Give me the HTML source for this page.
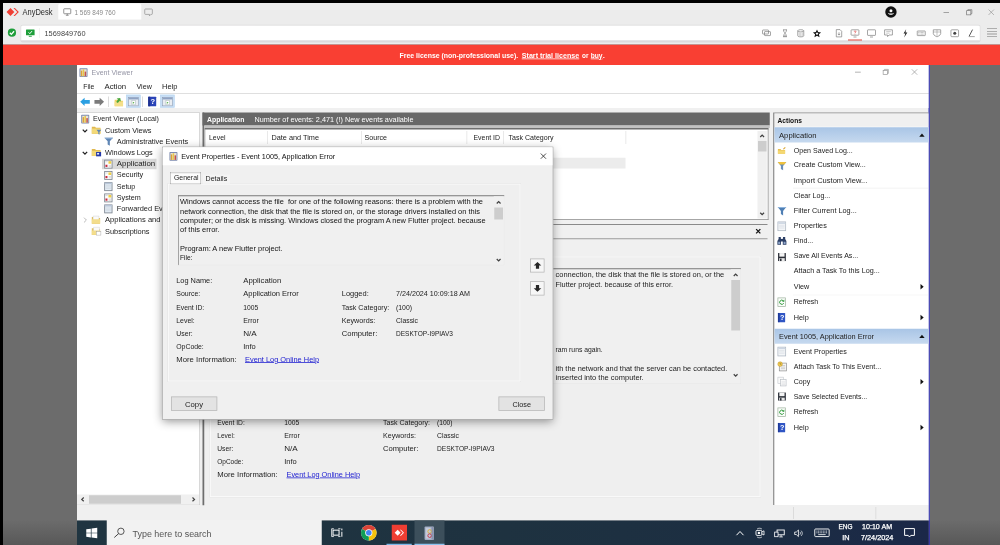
<!DOCTYPE html>
<html lang="en"><head><meta charset="utf-8"><title>AnyDesk - Event Viewer</title>
<style>
html,body{margin:0;padding:0;}
body{width:1000px;height:545px;overflow:hidden;background:#000;position:relative;font-family:"Liberation Sans",sans-serif;}
#clip{position:absolute;left:0;top:0;width:1000px;height:545px;overflow:hidden;background:#000;}
#root{position:absolute;left:0;top:0;width:4000px;height:2180px;transform:scale(0.25);transform-origin:0 0;filter:contrast(1);}
.a{position:absolute;box-sizing:border-box;}
.t{position:absolute;white-space:pre;line-height:1.2;transform-origin:0 50%;font-family:"Liberation Sans",sans-serif;}
svg{position:absolute;overflow:visible;}
</style></head>
<body>
<div id="clip">
<div id="root">
<div class="a" style="left:12px;top:260px;width:4028px;height:1960px;background:linear-gradient(to bottom,#6c6c6c 0,#6c6c6c 1820px,#585858 1920px,#585858 1960px);"></div>
<div class="a" style="left:12px;top:12px;width:4028px;height:167.2px;background:#ececec;"></div>
<div class="a" style="left:233.2px;top:13.6px;width:332px;height:64px;background:#fff;border-radius:8px 8px 0 0;"></div>
<div class="a" style="left:82px;top:99.2px;width:3840px;height:70.4px;background:#dcdadc;border-radius:8px;"></div>
<div class="a" style="left:82px;top:99.2px;width:3840px;height:62px;background:#fff;border:3.2px solid #dedede;border-bottom:none;border-radius:8px 8px 0 0;"></div>
<div class="a" style="left:12px;top:178.8px;width:4028px;height:81.2px;background:#f93f33;"></div>
<span class="t" style="left:90px;top:28.92px;font-size:34.4px;color:#2a2a2a;transform:scaleX(0.8719);">AnyDesk</span>
<span class="t" style="left:298px;top:34.28px;font-size:27.2px;color:#8a8a8a;transform:scaleX(0.9432);">1 569 849 760</span>
<span class="t" style="left:178px;top:113.84px;font-size:30.4px;color:#444;transform:scaleX(0.9702);">1569849760</span>
<span class="t" style="left:1598px;top:203.04px;font-size:30.4px;color:#fff;font-weight:bold;transform:scaleX(0.9128);">Free license (non-professional use).</span>
<span class="t" style="left:2086.8px;top:203.04px;font-size:30.4px;color:#fff;font-weight:bold;text-decoration:underline;transform:scaleX(0.9391);">Start trial license</span>
<span class="t" style="left:2328px;top:203.04px;font-size:30.4px;color:#fff;font-weight:bold;transform:scaleX(0.8419);">or</span>
<span class="t" style="left:2362.8px;top:203.04px;font-size:30.4px;color:#fff;font-weight:bold;text-decoration:underline;transform:scaleX(0.8736);">buy</span>
<span class="t" style="left:2410.8px;top:203.04px;font-size:30.4px;color:#fff;font-weight:bold;">.</span>
<svg style="left:24.8px;top:31.2px" width="52" height="33.6" viewBox="0 0 13 8.4"><path d="M0.3 4.2 L4.2 0.2 L8.1 4.2 L4.2 8.2 Z" fill="#ef3e33"/><path d="M7.2 0.2 L8.6 0.2 L12.6 4.2 L8.6 8.2 L7.2 8.2 L7.9 7.4 L11 4.2 L7.9 1 Z" fill="#ef3e33"/></svg>
<svg style="left:253.2px;top:33.2px" width="32" height="30" viewBox="0 0 8 7.5"><rect x="0.5" y="0.5" width="7" height="5" rx="0.6" fill="none" stroke="#7a7a7a" stroke-width="0.8"/><path d="M2.6 7 H5.4 M4 5.5 V7" stroke="#7a7a7a" stroke-width="0.8" fill="none"/></svg>
<svg style="left:576.8px;top:33.6px" width="34.4" height="32" viewBox="0 0 8.6 8"><path d="M1.2 0.5 H7.4 Q8.1 0.5 8.1 1.2 V5.2 Q8.1 5.9 7.4 5.9 H6.6 L5.2 7.4 V5.9 H1.2 Q0.5 5.9 0.5 5.2 V1.2 Q0.5 0.5 1.2 0.5Z" fill="none" stroke="#8e8e8e" stroke-width="0.7"/></svg>
<svg style="left:30.8px;top:114.4px" width="33.6" height="33.6" viewBox="0 0 8.4 8.4"><circle cx="4.2" cy="4.2" r="4.1" fill="#1e9e3a"/><path d="M2.1 4.3 L3.6 5.9 L6.3 2.8" stroke="#fff" stroke-width="1.3" fill="none"/></svg>
<svg style="left:104px;top:117.6px" width="34.4" height="28.8" viewBox="0 0 8.6 7.2"><rect x="0" y="0" width="8.6" height="5.8" rx="0.5" fill="#1e9e3a"/><path d="M2.8 6.8 H5.8" stroke="#1e9e3a" stroke-width="0.9"/><path d="M2.6 2.9 L3.8 4.2 L6 1.6" stroke="#fff" stroke-width="1" fill="none"/></svg>
<div class="a" style="left:158px;top:112px;width:2.4px;height:40px;background:#e6e6e6;"></div>
<svg style="left:3048px;top:115.8px" width="36" height="34" viewBox="0 0 9 8.5"><rect x="0.5" y="1" width="6" height="4" rx="0.5" stroke="#808080" stroke-width="0.7" fill="none"/><rect x="2.5" y="2.6" width="6" height="4" rx="0.5" stroke="#808080" stroke-width="0.7" fill="none"/></svg>
<svg style="left:3122px;top:115.8px" width="36" height="34" viewBox="0 0 9 8.5"><path d="M2.5 0.8 H6.5 M2.5 7.7 H6.5 M3 0.8 C3 3 4.2 3.6 4.5 4.2 C4.8 3.6 6 3 6 0.8 M3 7.7 C3 5.5 4.2 4.9 4.5 4.2 C4.8 4.9 6 5.5 6 7.7" stroke="#808080" stroke-width="0.7" fill="none"/><path d="M3.3 7.5 L4.5 6 L5.7 7.5Z" fill="#808080"/></svg>
<svg style="left:3185.2px;top:115.8px" width="36" height="34" viewBox="0 0 9 8.5"><ellipse cx="4.5" cy="1.8" rx="3" ry="1.1" stroke="#808080" stroke-width="0.7" fill="none"/><path d="M1.5 1.8 V6.8 C1.5 8.2 7.5 8.2 7.5 6.8 V1.8" stroke="#808080" stroke-width="0.7" fill="none"/><path d="M3 3.5 V7.3 M4.5 3.7 V7.6 M6 3.5 V7.3" stroke="#999" stroke-width="0.5"/></svg>
<svg style="left:3250px;top:115.8px" width="36" height="34" viewBox="0 0 9 8.5"><path d="M4.5 0.4 L5.7 3.1 L8.6 3.4 L6.4 5.3 L7.1 8.2 L4.5 6.7 L1.9 8.2 L2.6 5.3 L0.4 3.4 L3.3 3.1 Z" fill="#111"/><path d="M4.5 2.9 L5 4 L6.1 4.1 L5.3 4.8 L5.5 5.9 L4.5 5.3 L3.5 5.9 L3.7 4.8 L2.9 4.1 L4 4 Z" fill="#fff"/></svg>
<svg style="left:3338px;top:115.8px" width="36" height="34" viewBox="0 0 9 8.5"><path d="M1.8 0.6 H5.5 L7.2 2.3 V7.9 H1.8 Z" stroke="#808080" stroke-width="0.7" fill="none"/><path d="M4.5 3.3 V6 M3.3 4.9 L4.5 6.1 L5.7 4.9" stroke="#808080" stroke-width="0.7" fill="none"/></svg>
<svg style="left:3402px;top:115.8px" width="36" height="34" viewBox="0 0 9 8.5"><rect x="0.6" y="0.8" width="7.8" height="5.4" rx="0.5" stroke="#808080" stroke-width="0.7" fill="none"/><path d="M3 8 H6" stroke="#808080" stroke-width="0.7" fill="none"/><path d="M3.7 2.6 C3.7 1.7 5.4 1.7 5.4 2.7 C5.4 3.4 4.5 3.4 4.5 4.2 M4.5 4.9 V5.4" stroke="#d33" stroke-width="0.7" fill="none"/></svg>
<div class="a" style="left:3392px;top:158.4px;width:56px;height:3.6px;background:#e0443a;"></div>
<svg style="left:3467.6px;top:115.8px" width="36" height="34" viewBox="0 0 9 8.5"><rect x="0.5" y="0.8" width="8" height="5.6" rx="0.5" stroke="#808080" stroke-width="0.7" fill="none"/><path d="M3 8 H6" stroke="#808080" stroke-width="0.7" fill="none"/></svg>
<svg style="left:3536.4px;top:115.8px" width="36" height="34" viewBox="0 0 9 8.5"><path d="M0.6 0.8 H8.4 V6 H5 L3.6 7.6 V6 H0.6 Z" stroke="#808080" stroke-width="0.7" fill="none"/><path d="M2.2 2.6 H6.8 M2.2 4.2 H5.5" stroke="#999" stroke-width="0.5"/></svg>
<svg style="left:3602.8px;top:115.8px" width="36" height="34" viewBox="0 0 9 8.5"><path d="M5.4 0.2 L2.8 4.6 H4.6 L3.4 8.4 L6.6 3.4 H4.7 Z" fill="#222"/></svg>
<svg style="left:3666.8px;top:115.8px" width="36" height="34" viewBox="0 0 9 8.5"><rect x="0.5" y="2" width="8" height="4.6" rx="0.4" stroke="#808080" stroke-width="0.7" fill="none"/><path d="M1.6 3.4 H7.4 M1.6 5.1 H7.4" stroke="#888" stroke-width="0.7" stroke-dasharray="0.8 0.5"/></svg>
<svg style="left:3730.4px;top:115.8px" width="36" height="34" viewBox="0 0 9 8.5"><path d="M0.8 0.8 H8.2 V4.6 C8.2 6.4 4.5 7.8 4.5 7.8 C4.5 7.8 0.8 6.4 0.8 4.6 Z" stroke="#808080" stroke-width="0.7" fill="none"/><path d="M0.8 3 H8.2 M4.5 0.8 V7.6" stroke="#888" stroke-width="0.5"/></svg>
<svg style="left:3801.2px;top:115.8px" width="36" height="34" viewBox="0 0 9 8.5"><rect x="0.7" y="0.8" width="7.6" height="6.9" rx="0.8" stroke="#808080" stroke-width="0.7" fill="none"/><circle cx="4.5" cy="4.2" r="1.5" fill="#444"/></svg>
<svg style="left:3866.8px;top:115.8px" width="36" height="34" viewBox="0 0 9 8.5"><path d="M5.8 0.6 L2.4 7.2" stroke="#444" stroke-width="0.9"/><path d="M2 7.6 H8" stroke="#808080" stroke-width="0.7" fill="none"/></svg>
<div class="a" style="left:3948px;top:112.8px;width:40px;height:3.2px;background:#9a9a9a;"></div>
<div class="a" style="left:3948px;top:123.6px;width:40px;height:3.2px;background:#9a9a9a;"></div>
<div class="a" style="left:3948px;top:134.4px;width:40px;height:3.2px;background:#9a9a9a;"></div>
<div class="a" style="left:3948px;top:145.2px;width:40px;height:3.2px;background:#9a9a9a;"></div>
<svg style="left:3541.2px;top:25.2px" width="45.6" height="45.6" viewBox="0 0 11.4 11.4"><circle cx="5.7" cy="5.7" r="5.7" fill="#111"/><circle cx="5.7" cy="4.6" r="1.5" fill="#fff"/><path d="M2.6 6.4 C3.2 9.2 8.2 9.2 8.8 6.4 C7.6 7.6 3.8 7.6 2.6 6.4Z" fill="#fff"/></svg>
<div class="a" style="left:3774px;top:49.2px;width:22px;height:2.8px;background:#8a8a8a;"></div>
<svg style="left:3865.2px;top:37.2px" width="24" height="24" viewBox="0 0 6 6"><rect x="0.4" y="1.4" width="4.2" height="4.2" fill="none" stroke="#777" stroke-width="0.7"/><path d="M1.6 1.4 V0.4 H5.6 V4.4 H4.6" fill="none" stroke="#777" stroke-width="0.7"/></svg>
<svg style="left:3952.8px;top:37.2px" width="24" height="24" viewBox="0 0 6 6"><path d="M0.3 0.3 L5.7 5.7 M5.7 0.3 L0.3 5.7" stroke="#999" stroke-width="0.7"/></svg>
<div class="a" style="left:308px;top:260px;width:3410px;height:1822px;background:#f0f0f0;"></div>
<div class="a" style="left:3714.4px;top:260px;width:4.8px;height:1960px;background:#2b2bb4;"></div>
<div class="a" style="left:308px;top:260px;width:3406.4px;height:113.2px;background:#fff;"></div>
<div class="a" style="left:308px;top:373.2px;width:3406.4px;height:2.8px;background:#d8d8d8;"></div>
<div class="a" style="left:308px;top:376px;width:3406.4px;height:56px;background:#fff;"></div>
<span class="t" style="left:366px;top:270.56px;font-size:31.2px;color:#9494a4;transform:scaleX(0.9018);">Event Viewer</span>
<span class="t" style="left:333.2px;top:324.56px;font-size:32.4px;color:#1a1a1a;transform:scaleX(0.8429);">File</span>
<span class="t" style="left:418px;top:324.56px;font-size:32.4px;color:#1a1a1a;transform:scaleX(0.9641);">Action</span>
<span class="t" style="left:545.6px;top:324.56px;font-size:32.4px;color:#1a1a1a;transform:scaleX(0.8790);">View</span>
<span class="t" style="left:647.6px;top:324.56px;font-size:32.4px;color:#1a1a1a;transform:scaleX(0.9246);">Help</span>
<div class="a" style="left:3420px;top:287.2px;width:23.2px;height:2.8px;background:#9a9a9a;"></div>
<svg style="left:3531.2px;top:276px" width="24" height="24" viewBox="0 0 6 6"><rect x="0.4" y="1.4" width="4.2" height="4.2" fill="none" stroke="#999" stroke-width="0.7"/><path d="M1.6 1.4 V0.4 H5.6 V4.4 H4.6" fill="none" stroke="#999" stroke-width="0.7"/></svg>
<svg style="left:3646.4px;top:276px" width="24" height="24" viewBox="0 0 6 6"><path d="M0.3 0.3 L5.7 5.7 M5.7 0.3 L0.3 5.7" stroke="#999" stroke-width="0.7"/></svg>
<div class="a" style="left:308px;top:2020px;width:3406.4px;height:62px;background:#f0f0f0;"></div>
<div class="a" style="left:3172px;top:2028px;width:2.8px;height:48px;background:#d5d5d5;"></div>
<div class="a" style="left:3502px;top:2028px;width:2.8px;height:48px;background:#d5d5d5;"></div>
<svg style="left:316.8px;top:271.6px" width="34" height="36.8" viewBox="0 0 8.5 9.2"><rect x="0.2" y="0.3" width="8.1" height="8.7" rx="0.7" fill="#7d8bb0"/><rect x="1.2" y="1.2" width="6.2" height="7" fill="#e8e4d8"/><rect x="1.6" y="2.6" width="1.5" height="5.6" fill="#d9a23a"/><rect x="3.5" y="1.4" width="1.5" height="6.8" fill="#e8c84a"/><rect x="5.4" y="3.6" width="1.5" height="4.6" fill="#c0504d"/></svg>
<svg style="left:320px;top:389.6px" width="40" height="34.4" viewBox="0 0 10 8.6"><path d="M0.2 4.3 L4.6 0.2 V2.4 H9.8 V6.2 H4.6 V8.4 Z" fill="#2a9fe2"/></svg>
<svg style="left:377.2px;top:389.6px" width="40" height="34.4" viewBox="0 0 10 8.6"><path d="M9.8 4.3 L5.4 0.2 V2.4 H0.2 V6.2 H5.4 V8.4 Z" fill="#7b7b7b"/></svg>
<div class="a" style="left:432px;top:386px;width:2.8px;height:42px;background:#cfcfcf;"></div>
<svg style="left:456.8px;top:389.2px" width="36.8" height="36.8" viewBox="0 0 9.2 9.2"><path d="M0.4 2.6 H3.4 L4.2 3.6 H8.8 V8.9 H0.4 Z" fill="#efd166"/><path d="M0.4 4.4 H8.8 V8.9 H0.4Z" fill="#f4df8a"/><path d="M4.4 0.2 L7 2.8 H5.4 V5.8 H3.4 V2.8 H1.8 Z" fill="#4aa83c" transform="rotate(35 4.4 3)"/></svg>
<div class="a" style="left:504.8px;top:379.2px;width:56.8px;height:51.2px;background:#c7def5;border:2.4px solid #b3d1ef;"></div>
<svg style="left:513.6px;top:388.8px" width="40" height="35.2" viewBox="0 0 10 8.8"><rect x="0.2" y="0.2" width="9.6" height="8.4" fill="#e9edf2" stroke="#8794a8" stroke-width="0.5"/><rect x="0.2" y="0.2" width="9.6" height="2" fill="#8fa3c4"/><rect x="3.4" y="3.4" width="3.4" height="4.2" fill="#fff" stroke="#9aa" stroke-width="0.4"/><path d="M4.3 4.4 L6 5.5 L4.3 6.6Z" fill="#4aa83c"/></svg>
<div class="a" style="left:640.8px;top:379.2px;width:56.8px;height:51.2px;background:#c7def5;border:2.4px solid #b3d1ef;"></div>
<svg style="left:649.6px;top:388.8px" width="40" height="35.2" viewBox="0 0 10 8.8"><rect x="0.2" y="0.2" width="9.6" height="8.4" fill="#e9edf2" stroke="#8794a8" stroke-width="0.5"/><rect x="0.2" y="0.2" width="9.6" height="2" fill="#8fa3c4"/><rect x="3.4" y="3.4" width="3.4" height="4.2" fill="#fff" stroke="#9aa" stroke-width="0.4"/><path d="M4.3 4.4 L6 5.5 L4.3 6.6Z" fill="#4aa83c"/></svg>
<div class="a" style="left:569.2px;top:386px;width:2.8px;height:42px;background:#cfcfcf;"></div>
<svg style="left:592px;top:385.6px" width="33.6" height="40" viewBox="0 0 8.4 10"><rect x="0.2" y="0.2" width="8" height="9.6" rx="0.6" fill="#2b44b8"/><rect x="0.2" y="0.2" width="2" height="9.6" fill="#1f3190"/><text x="4.9" y="7.6" font-family="Liberation Sans, sans-serif" font-size="7.5" font-weight="bold" fill="#fff" text-anchor="middle">?</text></svg>
<div class="a" style="left:308px;top:450px;width:490px;height:1570px;background:#fff;border:2.8px solid #b8b8b8;border-left:none;"></div>
<div class="a" style="left:408px;top:635.2px;width:218.4px;height:41.6px;background:#d9d9d9;"></div>
<span class="t" style="left:372px;top:456.16px;font-size:31.2px;color:#222;transform:scaleX(0.9193);">Event Viewer (Local)</span>
<span class="t" style="left:420px;top:500.96px;font-size:31.2px;color:#222;transform:scaleX(0.9358);">Custom Views</span>
<span class="t" style="left:466.8px;top:545.36px;font-size:31.2px;color:#222;transform:scaleX(0.9537);">Administrative Events</span>
<span class="t" style="left:420px;top:590.16px;font-size:31.2px;color:#222;transform:scaleX(0.9427);">Windows Logs</span>
<span class="t" style="left:466.8px;top:635.36px;font-size:31.2px;color:#222;transform:scaleX(1.0093);">Application</span>
<span class="t" style="left:466.8px;top:680.16px;font-size:31.2px;color:#222;transform:scaleX(0.9408);">Security</span>
<span class="t" style="left:466.8px;top:725.36px;font-size:31.2px;color:#222;transform:scaleX(0.9078);">Setup</span>
<span class="t" style="left:466.8px;top:770.16px;font-size:31.2px;color:#222;transform:scaleX(0.9232);">System</span>
<span class="t" style="left:466.8px;top:814.96px;font-size:31.2px;color:#222;transform:scaleX(0.9478);">Forwarded Ev</span>
<span class="t" style="left:420px;top:859.76px;font-size:31.2px;color:#222;transform:scaleX(0.9700);">Applications and</span>
<span class="t" style="left:420px;top:904.56px;font-size:31.2px;color:#222;transform:scaleX(0.9508);">Subscriptions</span>
<svg style="left:323.6px;top:458.4px" width="33.6" height="36.8" viewBox="0 0 8.5 9.2"><rect x="0.2" y="0.3" width="8.1" height="8.7" rx="0.7" fill="#7d8bb0"/><rect x="1.2" y="1.2" width="6.2" height="7" fill="#e8e4d8"/><rect x="1.6" y="2.6" width="1.5" height="5.6" fill="#d9a23a"/><rect x="3.5" y="1.4" width="1.5" height="6.8" fill="#e8c84a"/><rect x="5.4" y="3.6" width="1.5" height="4.6" fill="#c0504d"/></svg>
<svg style="left:328.8px;top:515.6px" width="21.6" height="14.4" viewBox="0 0 5.4 3.6"><path d="M0.5 0.6 L2.7 2.9 L4.9 0.6" fill="none" stroke="#222" stroke-width="1.3"/></svg>
<svg style="left:366.4px;top:501.6px" width="40" height="37.6" viewBox="0 0 10 9.4"><path d="M0.3 1.2 H3.6 L4.4 2.2 H9 V8.2 H0.3 Z" fill="#e0b84e"/><path d="M0.3 3 H9 V8.2 H0.3Z" fill="#f3d978"/><path d="M5 4.2 H9.8 L8 6.4 V9.2 L6.8 8.4 V6.4 Z" fill="#5f86b5"/></svg>
<svg style="left:416.8px;top:549.2px" width="36" height="34.4" viewBox="0 0 9 8.6"><path d="M0.2 0.4 H8.8 L5.6 4 V8.4 L3.4 7.2 V4 Z" fill="#5f86b5"/><path d="M0.2 0.4 H8.8 L8 1.4 H1Z" fill="#8fb0d6"/></svg>
<svg style="left:328.8px;top:604.8px" width="21.6" height="14.4" viewBox="0 0 5.4 3.6"><path d="M0.5 0.6 L2.7 2.9 L4.9 0.6" fill="none" stroke="#222" stroke-width="1.3"/></svg>
<svg style="left:366.4px;top:591.2px" width="40" height="37.6" viewBox="0 0 10 9.4"><path d="M0.3 1.2 H3.6 L4.4 2.2 H9 V8.2 H0.3 Z" fill="#e0b84e"/><path d="M0.3 3 H9 V8.2 H0.3Z" fill="#f3d978"/><rect x="4.6" y="4.2" width="5" height="4.4" fill="#2438a8"/><rect x="5.6" y="5.2" width="2" height="1.6" fill="#e8eefc"/></svg>
<svg style="left:417.2px;top:639.2px" width="32.8" height="35.2" viewBox="0 0 8.2 8.8"><rect x="0.4" y="0.4" width="7.4" height="8" fill="#fdfdfd" stroke="#7d8590" stroke-width="0.85"/><rect x="4.2" y="1.4" width="2.8" height="2.6" fill="#f0cf45"/><rect x="1.2" y="5" width="2" height="2.2" fill="#c8283c"/><path d="M1.2 2 H3.4 M4.4 5.6 H7 M4.4 6.8 H7" stroke="#bbb" stroke-width="0.5"/></svg>
<svg style="left:417.2px;top:684px" width="32.8" height="35.2" viewBox="0 0 8.2 8.8"><rect x="0.4" y="0.4" width="7.4" height="8" fill="#fdfdfd" stroke="#7d8590" stroke-width="0.85"/><rect x="4.2" y="1.4" width="2.8" height="2.6" fill="#f0cf45"/><rect x="1.2" y="5" width="2" height="2.2" fill="#c8283c"/><path d="M1.2 2 H3.4 M4.4 5.6 H7 M4.4 6.8 H7" stroke="#bbb" stroke-width="0.5"/></svg>
<svg style="left:417.2px;top:728.8px" width="32.8" height="35.2" viewBox="0 0 8.2 8.8"><rect x="0.4" y="0.4" width="7.4" height="8" fill="#e4edf5" stroke="#7d8590" stroke-width="0.85"/><rect x="0.4" y="0.4" width="7.4" height="1.6" fill="#b9c6d8"/><path d="M1.4 3.4 H6.8 M1.4 4.8 H6.8 M1.4 6.2 H6.8" stroke="#c4ccd6" stroke-width="0.5"/></svg>
<svg style="left:417.2px;top:773.6px" width="32.8" height="35.2" viewBox="0 0 8.2 8.8"><rect x="0.4" y="0.4" width="7.4" height="8" fill="#fdfdfd" stroke="#7d8590" stroke-width="0.85"/><rect x="4.2" y="1.4" width="2.8" height="2.6" fill="#f0cf45"/><rect x="1.2" y="5" width="2" height="2.2" fill="#c8283c"/><path d="M1.2 2 H3.4 M4.4 5.6 H7 M4.4 6.8 H7" stroke="#bbb" stroke-width="0.5"/></svg>
<svg style="left:417.2px;top:818.4px" width="32.8" height="35.2" viewBox="0 0 8.2 8.8"><rect x="0.4" y="0.4" width="7.4" height="8" fill="#e4edf5" stroke="#7d8590" stroke-width="0.85"/><rect x="0.4" y="0.4" width="7.4" height="1.6" fill="#b9c6d8"/><path d="M1.4 3.4 H6.8 M1.4 4.8 H6.8 M1.4 6.2 H6.8" stroke="#c4ccd6" stroke-width="0.5"/></svg>
<svg style="left:333.6px;top:868.8px" width="13.6" height="22.4" viewBox="0 0 3.4 5.6"><path d="M0.5 0.4 L2.9 2.8 L0.5 5.2" fill="none" stroke="#aaa" stroke-width="0.8"/></svg>
<svg style="left:366.4px;top:860.8px" width="40" height="37.6" viewBox="0 0 10 9.4"><path d="M0.3 1.8 H3.4 L4.2 2.8 H8.6 V8.4 H0.3 Z" fill="#e0c060"/><path d="M1.6 0.8 H7.4 V5 H1.6Z" fill="#fafafa" stroke="#bbb" stroke-width="0.3"/><path d="M0.3 4 H8.6 V8.4 H0.3Z" fill="#f3dd8c"/></svg>
<svg style="left:366.4px;top:905.6px" width="40" height="37.6" viewBox="0 0 10 9.4"><path d="M0.3 1.8 H3.4 L4.2 2.8 H8.6 V8.4 H0.3 Z" fill="#e0c060"/><path d="M2 0.8 H8 V5 H2Z" fill="#fafafa" stroke="#bbb" stroke-width="0.3"/><path d="M0.3 4 H8.6 V8.4 H0.3Z" fill="#f3dd8c"/><rect x="4.8" y="5" width="4.6" height="3.6" fill="#fff" stroke="#999" stroke-width="0.4"/></svg>
<div class="a" style="left:308px;top:1978.4px;width:488px;height:39.2px;background:#f0f0f0;"></div>
<div class="a" style="left:356px;top:1980.8px;width:368px;height:34.4px;background:#cdcdcd;"></div>
<svg style="left:323.2px;top:1988.4px" width="16" height="19.2" viewBox="0 0 4 4.8"><path d="M3 0.5 L1 2.4 L3 4.3" fill="none" stroke="#404040" stroke-width="1.2"/></svg>
<svg style="left:766.4px;top:1988.4px" width="16" height="19.2" viewBox="0 0 4 4.8"><path d="M1 0.5 L3 2.4 L1 4.3" fill="none" stroke="#404040" stroke-width="1.2"/></svg>
<div class="a" style="left:810.4px;top:450px;width:6.4px;height:1571.2px;background:#6e6e6e;"></div>
<div class="a" style="left:810.4px;top:449.6px;width:2268.8px;height:52.8px;background:#686868;"></div>
<div class="a" style="left:816.8px;top:502.4px;width:2262.4px;height:10px;background:#c2c2c2;"></div>
<span class="t" style="left:828px;top:458.56px;font-size:31.2px;color:#fff;font-weight:bold;transform:scaleX(0.8834);">Application</span>
<span class="t" style="left:1017.6px;top:458.56px;font-size:31.2px;color:#fff;transform:scaleX(0.9312);">Number of events: 2,471 (!) New events available</span>
<div class="a" style="left:818.4px;top:512.4px;width:2256px;height:366.4px;background:#fff;border:3.2px solid #8a8a8a;border-top:6.4px solid #707070;"></div>
<div class="a" style="left:824px;top:631.2px;width:1678.4px;height:42.4px;background:#ececec;"></div>
<div class="a" style="left:1068px;top:524px;width:2.8px;height:52px;background:#e2e2e2;"></div>
<div class="a" style="left:1444px;top:524px;width:2.8px;height:52px;background:#e2e2e2;"></div>
<div class="a" style="left:1866px;top:524px;width:2.8px;height:52px;background:#e2e2e2;"></div>
<div class="a" style="left:2012px;top:524px;width:2.8px;height:52px;background:#e2e2e2;"></div>
<div class="a" style="left:2502.4px;top:524px;width:2.8px;height:52px;background:#e2e2e2;"></div>
<span class="t" style="left:836px;top:529.76px;font-size:31.2px;color:#222;transform:scaleX(0.8852);">Level</span>
<span class="t" style="left:1086px;top:529.76px;font-size:31.2px;color:#222;transform:scaleX(0.9368);">Date and Time</span>
<span class="t" style="left:1458px;top:529.76px;font-size:31.2px;color:#222;transform:scaleX(0.9107);">Source</span>
<span class="t" style="left:1894.4px;top:529.76px;font-size:31.2px;color:#222;transform:scaleX(0.8862);">Event ID</span>
<span class="t" style="left:2033.6px;top:529.76px;font-size:31.2px;color:#222;transform:scaleX(0.9030);">Task Category</span>
<div class="a" style="left:3030px;top:524px;width:36.8px;height:350.4px;background:#f0f0f0;"></div>
<div class="a" style="left:3032px;top:564px;width:33.6px;height:41.6px;background:#cdcdcd;"></div>
<svg style="left:3039.2px;top:536px" width="19.2" height="16" viewBox="0 0 4.8 4"><path d="M0.5 3 L2.4 1 L4.3 3" fill="none" stroke="#404040" stroke-width="1.2"/></svg>
<svg style="left:3039.2px;top:847.2px" width="19.2" height="16" viewBox="0 0 4.8 4"><path d="M0.5 1 L2.4 3 L4.3 1" fill="none" stroke="#404040" stroke-width="1.2"/></svg>
<div class="a" style="left:820px;top:896px;width:2250px;height:3.6px;background:#8a8a8a;"></div>
<div class="a" style="left:820px;top:953.2px;width:2250px;height:3.6px;background:#9a9a9a;"></div>
<svg style="left:3023.2px;top:915.2px" width="20" height="20" viewBox="0 0 5 5"><path d="M0.4 0.4 L4.6 4.6 M4.6 0.4 L0.4 4.6" stroke="#111" stroke-width="1.3"/></svg>
<div class="a" style="left:840px;top:1025.6px;width:2201.6px;height:962.4px;background:#efefef;border:3.2px solid #fcfcfc;box-shadow:0 0 0 2px #e6e6e6;"></div>
<div class="a" style="left:876px;top:1072.8px;width:2088px;height:462px;background:#f0f0f0;border:2.8px solid #e6e6e6;border-top:4px solid #7a7a7a;border-left:3.2px solid #8a8a8a;"></div>
<span class="t" style="left:2222px;top:1080.16px;font-size:31.2px;color:#222;transform:scaleX(0.9587);">connection, the disk that the file is stored on, or the</span>
<span class="t" style="left:2222px;top:1118.96px;font-size:31.2px;color:#222;transform:scaleX(0.9414);">Flutter project. because of this error.</span>
<span class="t" style="left:2222px;top:1380.16px;font-size:31.2px;color:#222;transform:scaleX(0.8713);">ram runs again.</span>
<span class="t" style="left:2222px;top:1454.16px;font-size:31.2px;color:#222;transform:scaleX(0.9455);">ith the network and that the server can be contacted.</span>
<span class="t" style="left:2222px;top:1491.36px;font-size:31.2px;color:#222;transform:scaleX(0.9599);">inserted into the computer.</span>
<div class="a" style="left:2923.2px;top:1076.8px;width:37.6px;height:456px;background:#f0f0f0;"></div>
<div class="a" style="left:2925.2px;top:1120px;width:34.4px;height:202px;background:#cdcdcd;"></div>
<svg style="left:2932.8px;top:1092px" width="19.2" height="16" viewBox="0 0 4.8 4"><path d="M0.5 3 L2.4 1 L4.3 3" fill="none" stroke="#404040" stroke-width="1.2"/></svg>
<svg style="left:2932.8px;top:1492.8px" width="19.2" height="16" viewBox="0 0 4.8 4"><path d="M0.5 1 L2.4 3 L4.3 1" fill="none" stroke="#404040" stroke-width="1.2"/></svg>
<span class="t" style="left:869.2px;top:1668.96px;font-size:31.2px;color:#222;transform:scaleX(0.8575);">Event ID:</span>
<span class="t" style="left:1137.2px;top:1668.96px;font-size:31.2px;color:#222;transform:scaleX(0.8647);">1005</span>
<span class="t" style="left:869.2px;top:1720.96px;font-size:31.2px;color:#222;transform:scaleX(0.8410);">Level:</span>
<span class="t" style="left:1137.2px;top:1720.96px;font-size:31.2px;color:#222;transform:scaleX(0.8945);">Error</span>
<span class="t" style="left:869.2px;top:1773.36px;font-size:31.2px;color:#222;transform:scaleX(0.8589);">User:</span>
<span class="t" style="left:1137.2px;top:1773.36px;font-size:31.2px;color:#222;transform:scaleX(1.0385);">N/A</span>
<span class="t" style="left:869.2px;top:1825.76px;font-size:31.2px;color:#222;transform:scaleX(0.8331);">OpCode:</span>
<span class="t" style="left:1137.2px;top:1825.76px;font-size:31.2px;color:#222;transform:scaleX(0.9610);">Info</span>
<span class="t" style="left:869.2px;top:1878.56px;font-size:31.2px;color:#222;transform:scaleX(0.9902);">More Information:</span>
<span class="t" style="left:1145.6px;top:1878.56px;font-size:31.2px;color:#1a1ad0;text-decoration:underline;transform:scaleX(0.9421);">Event Log Online Help</span>
<span class="t" style="left:1532px;top:1668.96px;font-size:31.2px;color:#222;transform:scaleX(0.9038);">Task Category:</span>
<span class="t" style="left:1748px;top:1668.96px;font-size:31.2px;color:#222;transform:scaleX(0.8515);">(100)</span>
<span class="t" style="left:1532px;top:1720.96px;font-size:31.2px;color:#222;transform:scaleX(0.9065);">Keywords:</span>
<span class="t" style="left:1748px;top:1720.96px;font-size:31.2px;color:#222;transform:scaleX(0.8755);">Classic</span>
<span class="t" style="left:1532px;top:1773.36px;font-size:31.2px;color:#222;transform:scaleX(0.9752);">Computer:</span>
<span class="t" style="left:1748px;top:1773.36px;font-size:31.2px;color:#222;transform:scaleX(0.8488);">DESKTOP-I9PIAV3</span>
<div class="a" style="left:3093.2px;top:450px;width:4.8px;height:1570px;background:#7a7a7a;"></div>
<div class="a" style="left:3098px;top:450px;width:616px;height:3.6px;background:#8a8a8a;"></div>
<div class="a" style="left:3098px;top:453.6px;width:616px;height:53.6px;background:#f0f0f0;"></div>
<div class="a" style="left:3098px;top:507.2px;width:616px;height:1512.8px;background:#fff;"></div>
<span class="t" style="left:3110px;top:460.96px;font-size:31.2px;color:#111;font-weight:bold;transform:scaleX(0.8568);">Actions</span>
<div class="a" style="left:3098px;top:508.8px;width:616px;height:60.8px;background:linear-gradient(to bottom,#a9c5e6,#c6d9ef);"></div>
<span class="t" style="left:3116px;top:520.96px;font-size:31.2px;color:#222;transform:scaleX(0.9831);">Application</span>
<svg style="left:3677.2px;top:534.4px" width="21.6" height="12.8" viewBox="0 0 5.4 3.2"><path d="M0 3.2 L2.7 0 L5.4 3.2Z" fill="#111"/></svg>
<span class="t" style="left:3174.8px;top:580.96px;font-size:31.2px;color:#222;transform:scaleX(0.9074);">Open Saved Log...</span>
<span class="t" style="left:3174.8px;top:640.16px;font-size:31.2px;color:#222;transform:scaleX(0.9299);">Create Custom View...</span>
<span class="t" style="left:3174.8px;top:700.56px;font-size:31.2px;color:#222;transform:scaleX(0.9656);">Import Custom View...</span>
<span class="t" style="left:3174.8px;top:764.16px;font-size:31.2px;color:#222;transform:scaleX(0.9055);">Clear Log...</span>
<span class="t" style="left:3174.8px;top:823.36px;font-size:31.2px;color:#222;transform:scaleX(0.9379);">Filter Current Log...</span>
<span class="t" style="left:3174.8px;top:883.36px;font-size:31.2px;color:#222;transform:scaleX(0.9286);">Properties</span>
<span class="t" style="left:3174.8px;top:943.36px;font-size:31.2px;color:#222;transform:scaleX(0.8999);">Find...</span>
<span class="t" style="left:3174.8px;top:1003.76px;font-size:31.2px;color:#222;transform:scaleX(0.9020);">Save All Events As...</span>
<span class="t" style="left:3174.8px;top:1062.96px;font-size:31.2px;color:#222;transform:scaleX(0.9257);">Attach a Task To this Log...</span>
<span class="t" style="left:3174.8px;top:1127.36px;font-size:31.2px;color:#222;transform:scaleX(0.9247);">View</span>
<svg style="left:3682.4px;top:1136.4px" width="12.8" height="21.6" viewBox="0 0 3.2 5.4"><path d="M0 0 L3.2 2.7 L0 5.4Z" fill="#111"/></svg>
<span class="t" style="left:3174.8px;top:1188.16px;font-size:31.2px;color:#222;transform:scaleX(0.8974);">Refresh</span>
<span class="t" style="left:3174.8px;top:1250.16px;font-size:31.2px;color:#222;transform:scaleX(0.9352);">Help</span>
<svg style="left:3682.4px;top:1259.2px" width="12.8" height="21.6" viewBox="0 0 3.2 5.4"><path d="M0 0 L3.2 2.7 L0 5.4Z" fill="#111"/></svg>
<span class="t" style="left:3174.8px;top:1386.16px;font-size:31.2px;color:#222;transform:scaleX(0.9195);">Event Properties</span>
<span class="t" style="left:3174.8px;top:1445.76px;font-size:31.2px;color:#222;transform:scaleX(0.9136);">Attach Task To This Event...</span>
<span class="t" style="left:3174.8px;top:1506.56px;font-size:31.2px;color:#222;transform:scaleX(0.9064);">Copy</span>
<svg style="left:3682.4px;top:1515.6px" width="12.8" height="21.6" viewBox="0 0 3.2 5.4"><path d="M0 0 L3.2 2.7 L0 5.4Z" fill="#111"/></svg>
<span class="t" style="left:3174.8px;top:1565.76px;font-size:31.2px;color:#222;transform:scaleX(0.8879);">Save Selected Events...</span>
<span class="t" style="left:3174.8px;top:1628.16px;font-size:31.2px;color:#222;transform:scaleX(0.8974);">Refresh</span>
<span class="t" style="left:3174.8px;top:1690.16px;font-size:31.2px;color:#222;transform:scaleX(0.9352);">Help</span>
<svg style="left:3682.4px;top:1699.2px" width="12.8" height="21.6" viewBox="0 0 3.2 5.4"><path d="M0 0 L3.2 2.7 L0 5.4Z" fill="#111"/></svg>
<div class="a" style="left:3172px;top:751.2px;width:540px;height:2.4px;background:#f0f0f0;"></div>
<div class="a" style="left:3172px;top:1178.8px;width:540px;height:2.4px;background:#f0f0f0;"></div>
<svg style="left:3109.6px;top:585.6px" width="34.4" height="30.4" viewBox="0 0 8.6 7.6"><path d="M0.4 2.6 H3 L3.8 3.4 H7.6 V7.3 H0.4 Z" fill="#e9c04e"/><path d="M0.4 4 H7.6 V7.3 H0.4Z" fill="#f4d873"/><path d="M5.4 2.6 L7.4 0.4 L8.2 1.2 L6.4 3" fill="#d9a83a"/></svg>
<svg style="left:3109.6px;top:645.6px" width="36" height="36" viewBox="0 0 9 9"><path d="M0.2 0.6 H8.8 L5.6 4.4 V8.8 L3.4 7.4 V4.4 Z" fill="#6b8fb8"/><path d="M0.2 0.6 H8.8 L6.8 3 H2.2Z" fill="#f0c23c"/></svg>
<svg style="left:3109.6px;top:826.4px" width="36" height="36.8" viewBox="0 0 9 9.2"><path d="M0.2 0.6 H8.8 L5.6 4.4 V9 L3.4 7.6 V4.4 Z" fill="#4f7fb4"/><path d="M0.2 0.6 H8.8 L8.2 1.6 H0.8Z" fill="#8fb4dc"/></svg>
<svg style="left:3110.4px;top:885.6px" width="34.4" height="38.4" viewBox="0 0 8.6 9.6"><rect x="0.4" y="0.4" width="7.8" height="8.8" fill="#f4f6f8" stroke="#a9b3bf" stroke-width="0.7"/><rect x="0.8" y="0.8" width="7" height="1.6" fill="#cdd6e2"/><path d="M1.6 3.8 H7 M1.6 5.2 H7 M1.6 6.6 H7" stroke="#d0d6de" stroke-width="0.5"/></svg>
<svg style="left:3108px;top:945.6px" width="39.2" height="36" viewBox="0 0 9.8 9"><path d="M1.6 0.6 H3.8 V2 L4.4 2.6 H5.4 L6 2 V0.6 H8.2 V2.4 L9.4 4.6 V8.2 H5.8 V5 H4 V8.2 H0.4 V4.6 L1.6 2.4Z" fill="#2c3f66"/><path d="M1.2 5.2 H3.2 V7.4 H1.2Z M6.6 5.2 H8.6 V7.4 H6.6Z" fill="#8ca3c8"/></svg>
<svg style="left:3110.8px;top:1011.2px" width="33.6" height="34.4" viewBox="0 0 8.4 8.6"><path d="M0.3 0.3 H8.1 V8.3 H0.3Z" fill="#2b2f38"/><rect x="1.6" y="0.3" width="5.2" height="3.6" fill="#f4f4f4"/><rect x="1.4" y="5.4" width="5.6" height="2.9" fill="#e8e8e8"/><rect x="2.2" y="5.9" width="1.6" height="2.4" fill="#2b2f38"/></svg>
<svg style="left:3110.4px;top:1190.4px" width="33.6" height="37.6" viewBox="0 0 8.4 9.4"><rect x="0.4" y="0.4" width="7.6" height="8.6" fill="#fbfdfb" stroke="#9ab09a" stroke-width="0.7"/><path d="M5.9 3.4 A2.1 2.1 0 1 0 6.2 5.6" fill="none" stroke="#2f9a3a" stroke-width="1"/><path d="M6.8 2 V4.2 H4.6Z" fill="#2f9a3a"/></svg>
<svg style="left:3111.2px;top:1251.2px" width="30.4" height="38.4" viewBox="0 0 7.6 9.6"><rect x="0.2" y="0.2" width="7.2" height="9.2" rx="0.5" fill="#2f55c4"/><rect x="0.2" y="0.2" width="1.6" height="9.2" fill="#1f3a98"/><text x="4.5" y="7.4" font-family="Liberation Sans, sans-serif" font-size="7.2" font-weight="bold" fill="#fff" text-anchor="middle">?</text></svg>
<svg style="left:3110.4px;top:1387.2px" width="34.4" height="38.4" viewBox="0 0 8.6 9.6"><rect x="0.4" y="0.4" width="7.8" height="8.8" fill="#f4f6f8" stroke="#a9b3bf" stroke-width="0.7"/><rect x="0.8" y="0.8" width="7" height="1.6" fill="#cdd6e2"/><path d="M1.6 3.8 H7 M1.6 5.2 H7 M1.6 6.6 H7" stroke="#d0d6de" stroke-width="0.5"/></svg>
<svg style="left:3109.6px;top:1445.6px" width="37.6" height="39.2" viewBox="0 0 9.4 9.8"><rect x="1.8" y="1.6" width="7.2" height="7.8" fill="#f6f6f6" stroke="#8e8e8e" stroke-width="0.7"/><path d="M3.4 4 H7.6 M3.4 5.6 H7.6 M3.4 7.2 H7.6" stroke="#aaa" stroke-width="0.5"/><circle cx="2.6" cy="2.6" r="2.3" fill="#f3cf55" stroke="#b98a1e" stroke-width="0.5"/><path d="M2.6 1.2 V2.7 H3.8" stroke="#7a5a10" stroke-width="0.5" fill="none"/></svg>
<svg style="left:3110.4px;top:1507.2px" width="36" height="38.4" viewBox="0 0 9 9.6"><rect x="0.4" y="0.4" width="5.4" height="6.4" fill="#fafafa" stroke="#c2c6cc" stroke-width="0.6"/><rect x="3" y="2.8" width="5.6" height="6.4" fill="#fafafa" stroke="#b4b9c0" stroke-width="0.6"/><path d="M4 5 H7.6 M4 6.4 H7.6 M4 7.8 H7.6" stroke="#d4d8dc" stroke-width="0.5"/></svg>
<svg style="left:3110.8px;top:1568.8px" width="33.6" height="34.4" viewBox="0 0 8.4 8.6"><path d="M0.3 0.3 H8.1 V8.3 H0.3Z" fill="#2b2f38"/><rect x="1.6" y="0.3" width="5.2" height="3.6" fill="#f4f4f4"/><rect x="1.4" y="5.4" width="5.6" height="2.9" fill="#e8e8e8"/><rect x="2.2" y="5.9" width="1.6" height="2.4" fill="#2b2f38"/></svg>
<svg style="left:3110.4px;top:1629.6px" width="33.6" height="37.6" viewBox="0 0 8.4 9.4"><rect x="0.4" y="0.4" width="7.6" height="8.6" fill="#fbfdfb" stroke="#9ab09a" stroke-width="0.7"/><path d="M5.9 3.4 A2.1 2.1 0 1 0 6.2 5.6" fill="none" stroke="#2f9a3a" stroke-width="1"/><path d="M6.8 2 V4.2 H4.6Z" fill="#2f9a3a"/></svg>
<svg style="left:3111.2px;top:1691.2px" width="30.4" height="38.4" viewBox="0 0 7.6 9.6"><rect x="0.2" y="0.2" width="7.2" height="9.2" rx="0.5" fill="#2f55c4"/><rect x="0.2" y="0.2" width="1.6" height="9.2" fill="#1f3a98"/><text x="4.5" y="7.4" font-family="Liberation Sans, sans-serif" font-size="7.2" font-weight="bold" fill="#fff" text-anchor="middle">?</text></svg>
<div class="a" style="left:3098px;top:1314.8px;width:616px;height:60px;background:linear-gradient(to bottom,#a9c5e6,#c6d9ef);"></div>
<span class="t" style="left:3116px;top:1325.76px;font-size:31.2px;color:#222;transform:scaleX(0.9407);">Event 1005, Application Error</span>
<svg style="left:3677.2px;top:1339.2px" width="21.6" height="12.8" viewBox="0 0 5.4 3.2"><path d="M0 3.2 L2.7 0 L5.4 3.2Z" fill="#111"/></svg>
<div class="a" style="left:648.8px;top:587.2px;width:1564px;height:1090.4px;background:#f0f0f0;box-shadow:0 8px 36px rgba(0,0,0,0.42);border:2.4px solid #8f8f8f;"></div>
<div class="a" style="left:651.2px;top:589.2px;width:1559.2px;height:72px;background:#fff;"></div>
<span class="t" style="left:725.2px;top:606.56px;font-size:31.2px;color:#111;transform:scaleX(0.9302);">Event Properties - Event 1005, Application Error</span>
<div class="a" style="left:672px;top:735.2px;width:1410px;height:791.2px;background:#efefef;border:3.2px solid #fcfcfc;box-shadow:0 0 0 2px #e2e2e2;"></div>
<div class="a" style="left:680.8px;top:690px;width:122.4px;height:45.6px;background:#fcfcfc;border:2.8px dotted #4a4a4a;"></div>
<div class="a" style="left:812px;top:698px;width:108px;height:37.2px;background:#f4f4f4;"></div>
<span class="t" style="left:696px;top:691.76px;font-size:31.2px;color:#222;transform:scaleX(0.8831);">General</span>
<span class="t" style="left:822.4px;top:694.96px;font-size:31.2px;color:#222;transform:scaleX(0.9104);">Details</span>
<div class="a" style="left:712px;top:781.2px;width:1305.2px;height:280px;background:#f0f0f0;border:2.8px solid #e6e6e6;border-top:4px solid #7a7a7a;border-left:3.2px solid #8a8a8a;"></div>
<span class="t" style="left:720px;top:787.76px;font-size:31.2px;color:#111;transform:scaleX(0.9551);">Windows cannot access the file  for one of the following reasons: there is a problem with the</span>
<span class="t" style="left:720px;top:824.96px;font-size:31.2px;color:#111;transform:scaleX(0.9521);">network connection, the disk that the file is stored on, or the storage drivers installed on this</span>
<span class="t" style="left:720px;top:862.16px;font-size:31.2px;color:#111;transform:scaleX(0.9533);">computer; or the disk is missing. Windows closed the program A new Flutter project. because</span>
<span class="t" style="left:720px;top:899.36px;font-size:31.2px;color:#111;transform:scaleX(0.9595);">of this error.</span>
<span class="t" style="left:720px;top:974.16px;font-size:31.2px;color:#111;transform:scaleX(0.9576);">Program: A new Flutter project.</span>
<span class="t" style="left:720px;top:1010.96px;font-size:31.2px;color:#111;transform:scaleX(0.8486);">File:</span>
<div class="a" style="left:1975.2px;top:785.2px;width:38.4px;height:273.2px;background:#f0f0f0;"></div>
<div class="a" style="left:1977.2px;top:830px;width:34.4px;height:48px;background:#cdcdcd;"></div>
<svg style="left:1984.8px;top:801.6px" width="19.2" height="16" viewBox="0 0 4.8 4"><path d="M0.5 3 L2.4 1 L4.3 3" fill="none" stroke="#404040" stroke-width="1.2"/></svg>
<svg style="left:1984.8px;top:1032px" width="19.2" height="16" viewBox="0 0 4.8 4"><path d="M0.5 1 L2.4 3 L4.3 1" fill="none" stroke="#404040" stroke-width="1.2"/></svg>
<div class="a" style="left:2120px;top:1033.6px;width:58.4px;height:56px;border:3.2px solid #b4b4b4;background:#f6f6f6;"></div>
<div class="a" style="left:2120px;top:1125.2px;width:58.4px;height:56.8px;border:3.2px solid #b4b4b4;background:#f6f6f6;"></div>
<svg style="left:677.2px;top:607.2px" width="33.6" height="36.8" viewBox="0 0 8.5 9.2"><rect x="0.2" y="0.3" width="8.1" height="8.7" rx="0.7" fill="#7d8bb0"/><rect x="1.2" y="1.2" width="6.2" height="7" fill="#e8e4d8"/><rect x="1.6" y="2.6" width="1.5" height="5.6" fill="#d9a23a"/><rect x="3.5" y="1.4" width="1.5" height="6.8" fill="#e8c84a"/><rect x="5.4" y="3.6" width="1.5" height="4.6" fill="#c0504d"/></svg>
<svg style="left:2161.6px;top:612.8px" width="23.2" height="23.2" viewBox="0 0 5.8 5.8"><path d="M0.3 0.3 L5.5 5.5 M5.5 0.3 L0.3 5.5" stroke="#222" stroke-width="0.8"/></svg>
<svg style="left:2133.6px;top:1046.8px" width="32" height="28.8" viewBox="0 0 8 7.2"><path d="M4 0.2 L7.8 3.8 H5.6 V7 H2.4 V3.8 H0.2 Z" fill="#262626"/></svg>
<svg style="left:2133.6px;top:1139.2px" width="32" height="28.8" viewBox="0 0 8 7.2"><path d="M4 7 L7.8 3.4 H5.6 V0.2 H2.4 V3.4 H0.2 Z" fill="#262626"/></svg>
<span class="t" style="left:704.8px;top:1103.76px;font-size:31.2px;color:#222;transform:scaleX(0.9439);">Log Name:</span>
<span class="t" style="left:973.2px;top:1103.76px;font-size:31.2px;color:#222;transform:scaleX(0.9962);">Application</span>
<span class="t" style="left:704.8px;top:1156.16px;font-size:31.2px;color:#222;transform:scaleX(0.8932);">Source:</span>
<span class="t" style="left:973.2px;top:1156.16px;font-size:31.2px;color:#222;transform:scaleX(0.9629);">Application Error</span>
<span class="t" style="left:704.8px;top:1208.56px;font-size:31.2px;color:#222;transform:scaleX(0.8731);">Event ID:</span>
<span class="t" style="left:973.2px;top:1208.56px;font-size:31.2px;color:#222;transform:scaleX(0.8647);">1005</span>
<span class="t" style="left:704.8px;top:1260.96px;font-size:31.2px;color:#222;transform:scaleX(0.8891);">Level:</span>
<span class="t" style="left:973.2px;top:1260.96px;font-size:31.2px;color:#222;transform:scaleX(0.8945);">Error</span>
<span class="t" style="left:704.8px;top:1313.36px;font-size:31.2px;color:#222;transform:scaleX(0.8857);">User:</span>
<span class="t" style="left:973.2px;top:1313.36px;font-size:31.2px;color:#222;transform:scaleX(1.0385);">N/A</span>
<span class="t" style="left:704.8px;top:1365.76px;font-size:31.2px;color:#222;transform:scaleX(0.8812);">OpCode:</span>
<span class="t" style="left:973.2px;top:1365.76px;font-size:31.2px;color:#222;transform:scaleX(0.9610);">Info</span>
<span class="t" style="left:704.8px;top:1418.16px;font-size:31.2px;color:#222;transform:scaleX(0.9902);">More Information:</span>
<span class="t" style="left:979.6px;top:1418.16px;font-size:31.2px;color:#1a1ad0;text-decoration:underline;transform:scaleX(0.9485);">Event Log Online Help</span>
<span class="t" style="left:1367.2px;top:1156.16px;font-size:31.2px;color:#222;transform:scaleX(0.9579);">Logged:</span>
<span class="t" style="left:1583.6px;top:1156.16px;font-size:31.2px;color:#222;transform:scaleX(0.9177);">7/24/2024 10:09:18 AM</span>
<span class="t" style="left:1367.2px;top:1208.56px;font-size:31.2px;color:#222;transform:scaleX(0.9134);">Task Category:</span>
<span class="t" style="left:1583.6px;top:1208.56px;font-size:31.2px;color:#222;transform:scaleX(0.8790);">(100)</span>
<span class="t" style="left:1367.2px;top:1260.96px;font-size:31.2px;color:#222;transform:scaleX(0.9203);">Keywords:</span>
<span class="t" style="left:1583.6px;top:1260.96px;font-size:31.2px;color:#222;transform:scaleX(0.8755);">Classic</span>
<span class="t" style="left:1367.2px;top:1313.36px;font-size:31.2px;color:#222;transform:scaleX(0.9752);">Computer:</span>
<span class="t" style="left:1583.6px;top:1313.36px;font-size:31.2px;color:#222;transform:scaleX(0.8414);">DESKTOP-I9PIAV3</span>
<div class="a" style="left:684px;top:1586px;width:184.8px;height:56.8px;border:3.2px solid #b8b8b8;background:#e3e3e3;"></div>
<div class="a" style="left:1994px;top:1586px;width:184.8px;height:56.8px;border:3.2px solid #b8b8b8;background:#e3e3e3;"></div>
<span class="t" style="left:740px;top:1597.36px;font-size:31.2px;color:#222;transform:scaleX(0.9888);">Copy</span>
<span class="t" style="left:2050px;top:1597.36px;font-size:31.2px;color:#222;transform:scaleX(0.9279);">Close</span>
<div class="a" style="left:308px;top:2081.6px;width:3406.4px;height:138.4px;background:linear-gradient(to right,#203541 0,#1e3240 50%,#1c2e42 78%,#1b2848 100%);"></div>
<div class="a" style="left:426.8px;top:2080.4px;width:860.4px;height:139.6px;background:#f2f2f2;"></div>
<span class="t" style="left:530px;top:2112.08px;font-size:37.6px;color:#555;transform:scaleX(0.9514);">Type here to search</span>
<div class="a" style="left:1658.4px;top:2081.6px;width:120px;height:138.4px;background:#3c4f5b;"></div>
<div class="a" style="left:1546px;top:2174.8px;width:101.2px;height:24px;background:#7ab8e8;"></div>
<div class="a" style="left:1658.4px;top:2174.8px;width:120px;height:24px;background:#8cc3ee;"></div>
<svg style="left:345.2px;top:2110.8px" width="44" height="42.4" viewBox="0 0 11 10.6"><path d="M0 1.5 L4.6 0.9 V5 H0Z M5.3 0.8 L11 0 V5 H5.3Z M0 5.6 H4.6 V9.7 L0 9.1Z M5.3 5.6 H11 V10.6 L5.3 9.8Z" fill="#fff"/></svg>
<svg style="left:454.4px;top:2109.6px" width="45.6" height="42.4" viewBox="0 0 11.4 10.6"><circle cx="7.4" cy="3.8" r="3.2" fill="none" stroke="#444" stroke-width="0.9"/><path d="M5.1 6.1 L0.8 10" stroke="#444" stroke-width="1"/></svg>
<svg style="left:1325.2px;top:2111.2px" width="45.6" height="39.2" viewBox="0 0 11.4 9.8"><rect x="1.8" y="2.4" width="6" height="5" fill="none" stroke="#fff" stroke-width="1"/><path d="M0.4 1 V8.8 M0.4 1 H2.6 M0.4 8.8 H2.6 M9.2 1 H7 M9.2 8.8 H7" stroke="#fff" stroke-width="0.8" fill="none"/><path d="M10.6 0.8 V2.6 M10.6 4 V9" stroke="#fff" stroke-width="1"/></svg>
<svg style="left:1444px;top:2099.6px" width="62.4" height="62.4" viewBox="-7.8 -7.8 15.6 15.6"><circle r="7.8" fill="#e8eaed"/><path d="M0 0 L-6.75 -3.9 A7.8 7.8 0 0 1 6.75 -3.9 Z" fill="#db4437"/><path d="M0 0 L6.75 -3.9 A7.8 7.8 0 0 1 0 7.8 Z" fill="#f4c20d"/><path d="M0 0 L0 7.8 A7.8 7.8 0 0 1 -6.75 -3.9 Z" fill="#0f9d58"/><circle r="3.6" fill="#fff"/><circle r="2.8" fill="#4285f4"/></svg>
<div class="a" style="left:1566.8px;top:2099.2px;width:61.6px;height:63.2px;background:#ef3e33;"></div>
<svg style="left:1578.4px;top:2118.4px" width="39.2" height="25.6" viewBox="0 0 13 8.4"><path d="M0.3 4.2 L4.2 0.2 L8.1 4.2 L4.2 8.2 Z" fill="#fff"/><path d="M7.2 0.2 L8.6 0.2 L12.6 4.2 L8.6 8.2 L7.2 8.2 L7.9 7.4 L11 4.2 L7.9 1 Z" fill="#fff"/></svg>
<svg style="left:1696.8px;top:2105.2px" width="40" height="56" viewBox="0 0 10 14"><rect x="0.3" y="0.3" width="9.4" height="13.4" rx="1" fill="#a3adc4"/><rect x="1.4" y="1.4" width="5" height="11" fill="#c3cadb"/><circle cx="5.4" cy="5.2" r="1.8" fill="none" stroke="#e0b030" stroke-width="0.9"/><circle cx="5.4" cy="9.4" r="1.8" fill="none" stroke="#c43040" stroke-width="0.9"/><rect x="7.4" y="0.6" width="2" height="12.8" fill="#8993ad"/></svg>
<svg style="left:2943.6px;top:2122.4px" width="32" height="20.8" viewBox="0 0 8 5.2"><path d="M0.5 4.7 L4 1 L7.5 4.7" fill="none" stroke="#fff" stroke-width="1"/></svg>
<svg style="left:3021.6px;top:2112px" width="36" height="40" viewBox="0 0 9 10"><rect x="0.5" y="2.4" width="5.8" height="5" rx="1" fill="none" stroke="#fff" stroke-width="0.9"/><path d="M6.3 4 L8.5 2.8 V7 L6.3 5.8" fill="none" stroke="#fff" stroke-width="0.8"/><circle cx="3.4" cy="4.9" r="1.2" fill="#fff"/><path d="M1.6 1 C3 0 5 0 6.4 1 M1.6 9 C3 10 5 10 6.4 9" fill="none" stroke="#fff" stroke-width="0.7"/></svg>
<svg style="left:3097.2px;top:2118px" width="42" height="32" viewBox="0 0 10.5 8"><rect x="2.8" y="0.5" width="7.2" height="4.8" fill="none" stroke="#fff" stroke-width="0.9"/><rect x="0.4" y="2.6" width="3.4" height="4.6" fill="#1c2c46" stroke="#fff" stroke-width="0.8"/><path d="M5 7.4 H8.6 M6.8 5.4 V7.4" stroke="#fff" stroke-width="0.8"/></svg>
<svg style="left:3177.2px;top:2118px" width="36" height="30.4" viewBox="0 0 9 7.6"><path d="M0.4 2.6 H2 L4.2 0.5 V7.1 L2 5 H0.4Z" fill="none" stroke="#fff" stroke-width="0.8"/><path d="M5.6 2.4 C6.4 3.2 6.4 4.4 5.6 5.2 M6.9 1.2 C8.4 2.6 8.4 5 6.9 6.4" fill="none" stroke="#fff" stroke-width="0.7"/></svg>
<svg style="left:3256.8px;top:2114px" width="61.6" height="34.4" viewBox="0 0 15.4 8.6"><rect x="0.5" y="0.5" width="14.4" height="7.6" rx="0.8" fill="none" stroke="#fff" stroke-width="0.9"/><path d="M2.2 2.6 H13.2 M2.2 4.3 H13.2" stroke="#fff" stroke-width="0.8" stroke-dasharray="1 0.6"/><path d="M4 6.1 H11.4" stroke="#fff" stroke-width="0.8"/></svg>
<svg style="left:3616.4px;top:2112px" width="44" height="40" viewBox="0 0 11 10"><path d="M0.6 0.6 H10.4 V7.4 H6.8 L5.5 9 L4.2 7.4 H0.6 Z" fill="none" stroke="#fff" stroke-width="1"/></svg>
<span class="t" style="left:3353.6px;top:2091.24px;font-size:27.6px;color:#fff;transform:scaleX(0.9432);-webkit-text-stroke:1px #fff;">ENG</span>
<span class="t" style="left:3368.8px;top:2134.84px;font-size:27.6px;color:#fff;transform:scaleX(1.0582);-webkit-text-stroke:1px #fff;">IN</span>
<span class="t" style="left:3447.6px;top:2091.24px;font-size:27.6px;color:#fff;transform:scaleX(1.0326);-webkit-text-stroke:1px #fff;">10:10 AM</span>
<span class="t" style="left:3444px;top:2134.84px;font-size:27.6px;color:#fff;transform:scaleX(1.0557);-webkit-text-stroke:1px #fff;">7/24/2024</span>
</div>
</div>
</body></html>
